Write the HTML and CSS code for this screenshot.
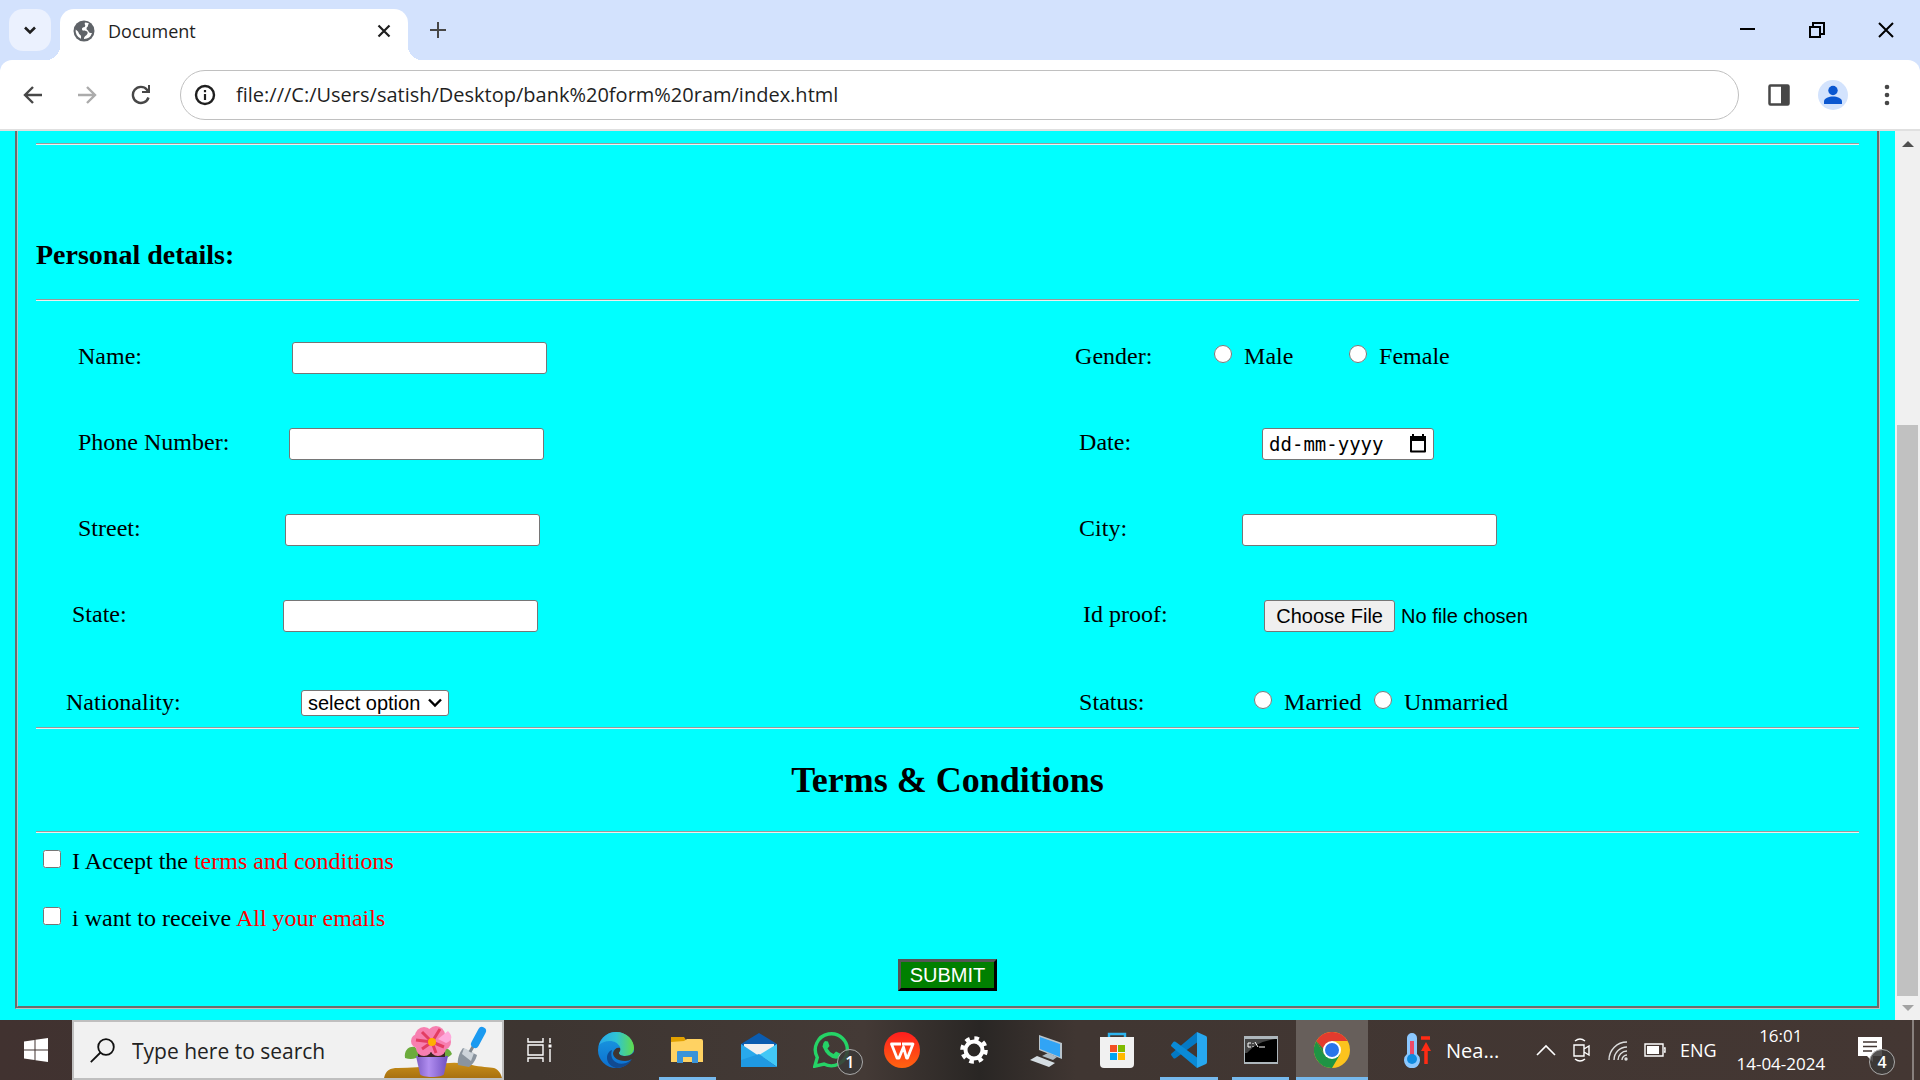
FILE: index.html
```html
<!DOCTYPE html>
<html lang="en-IN">
<head>
<meta charset="utf-8">
<title>Document</title>
<link rel="stylesheet" href="styles.css">
</head>
<body>
<header class="browser">
  <div class="tabstrip">
    <button class="tab-search" aria-label="Search tabs"><svg width="14" height="14" viewBox="0 0 14 14"><path d="M2 4.500l5 5 5-5" fill="none" stroke="#1f1f1f" stroke-width="2.600"/></svg></button>
    <div class="tab">
      <svg width="22" height="22" viewBox="0 0 22 22"><circle cx="11" cy="11" r="10.500" fill="#5f6368"/><path d="M12 2.500c-1 2 1 2.500 0 4s-3 .5-3 2.500 2 1.500 4 2 2 2 1 3.500-3 1.500-3 4.500a8.500 8.500 0 0 0 8-6c-2 0-3 0-3.500-1.500s-2-1.500-2-3 1.500-1.500 1.500-3 1-1.500 1-2A8.500 8.500 0 0 0 12 2.500zM2.700 9.500A8.500 8.500 0 0 0 8 18.800c0-2 .5-3-1-4s-1-2-2-3.300z" fill="#fff"/></svg>
      <span class="tab-title">Document</span>
      <button class="plain" aria-label="Close tab"><svg width="16" height="16" viewBox="0 0 16 16"><path d="M2.500 2.500l11 11m0-11l-11 11" stroke="#1f1f1f" stroke-width="2.200"/></svg></button>
    </div>
    <button class="plain new-tab" aria-label="New tab"><svg width="18" height="18" viewBox="0 0 18 18"><path d="M9 1v16M1 9h16" stroke="#474747" stroke-width="2"/></svg></button>
    <div class="window-controls">
      <button class="plain" aria-label="Minimize"><svg width="16" height="16" viewBox="0 0 16 16"><path d="M0 7h15" stroke="#000" stroke-width="2"/></svg></button>
      <button class="plain" aria-label="Restore"><svg width="16" height="16" viewBox="0 0 16 16"><path d="M1 5h10v10H1zM4 5V1h11v11h-4" fill="none" stroke="#000" stroke-width="2"/></svg></button>
      <button class="plain" aria-label="Close"><svg width="16" height="16" viewBox="0 0 16 16"><path d="M1 1l14 14M15 1L1 15" stroke="#000" stroke-width="2"/></svg></button>
    </div>
  </div>
  <div class="toolbar">
    <div class="nav-buttons">
      <button class="plain" aria-label="Back"><svg width="20" height="20" viewBox="0 0 20 20"><path d="M10 2L2 10l8 8M2 10h17" fill="none" stroke="#474747" stroke-width="2.400"/></svg></button>
      <button class="plain" aria-label="Forward"><svg width="20" height="20" viewBox="0 0 20 20"><path d="M10 2l8 8-8 8M18 10H1" fill="none" stroke="#ababab" stroke-width="2.400"/></svg></button>
      <button class="plain" aria-label="Reload"><svg width="20" height="20" viewBox="0 0 20 20"><path d="M17.500 12.500A8 8 0 1 1 16 4.700L18 7" fill="none" stroke="#474747" stroke-width="2.400"/><path d="M19 0v8h-8V6h4l2-2V0z" fill="#474747"/></svg></button>
    </div>
    <div class="omnibox">
      <svg width="22" height="22" viewBox="0 0 22 22"><circle cx="11" cy="11" r="9" fill="none" stroke="#1f1f1f" stroke-width="2.400"/><path d="M11 10v6M11 6v2.200" stroke="#1f1f1f" stroke-width="2.200"/></svg>
      <input class="url" type="text" aria-label="Address" value="file:///C:/Users/satish/Desktop/bank%20form%20ram/index.html">
    </div>
    <div class="tools">
      <button class="plain" aria-label="Side panel"><svg width="22" height="22" viewBox="0 0 22 22"><rect x="1.500" y="1.500" width="19" height="19" rx="1" fill="none" stroke="#474747" stroke-width="2.500"/><path d="M13 1h8v20h-8z" fill="#474747"/></svg></button>
      <button class="plain" aria-label="Profile"><svg width="30" height="30" viewBox="0 0 30 30"><circle cx="15" cy="15" r="15" fill="#d3e3fd"/><circle cx="15" cy="10.500" r="4.700" fill="#0b57d0"/><path d="M6 24v-2.500c0-3.500 5-5 9-5s9 1.500 9 5V24z" fill="#0b57d0"/></svg></button>
      <button class="plain" aria-label="Menu"><svg width="22" height="22" viewBox="0 0 22 22" fill="#474747"><circle cx="11" cy="3" r="2.300"/><circle cx="11" cy="11" r="2.300"/><circle cx="11" cy="19" r="2.300"/></svg></button>
    </div>
  </div>
</header>

<main class="viewport">
  <form class="page">
    <fieldset class="bank-form">
      <hr>
      <h3>Personal details:</h3>
      <hr>
      <div class="rows">
        <div class="row">
          <div class="cell near"><label class="w-name" for="name">Name:</label><input class="box" id="name" type="text"></div>
          <div class="cell"><span class="w-gender">Gender:</span><label class="option spaced"><input type="radio" name="gender">Male</label><label class="option"><input type="radio" name="gender">Female</label></div>
        </div>
        <div class="row">
          <div class="cell near"><label class="w-phone" for="phone">Phone Number:</label><input class="box" id="phone" type="text"></div>
          <div class="cell inset"><label class="w-date" for="date">Date:</label><span class="date-box"><input class="date" id="date" type="text" placeholder="dd-mm-yyyy"><svg width="18" height="20" viewBox="0 0 18 20"><path d="M2 3h14v14.500H2z" fill="none" stroke="#000" stroke-width="2" stroke-linejoin="round"/><path d="M1 2h16v5H1zM3 0h2v3H3zM13 0h2v3h-2z"/></svg></span></div>
        </div>
        <div class="row">
          <div class="cell near"><label class="w-street" for="street">Street:</label><input class="box" id="street" type="text"></div>
          <div class="cell inset"><label class="w-city" for="city">City:</label><input class="box" id="city" type="text"></div>
        </div>
        <div class="row">
          <div class="cell mid"><label class="w-state" for="state">State:</label><input class="box" id="state" type="text"></div>
          <div class="cell inset-more"><label class="w-proof" for="proof">Id proof:</label><input class="file" id="proof" type="file"></div>
        </div>
        <div class="row last">
          <div class="cell far"><label class="w-nation" for="nation">Nationality:</label><span class="select-box"><select id="nation"><option>select option</option></select><svg width="14" height="10" viewBox="0 0 14 10"><path d="M1 1.500l6 6 6-6" fill="none" stroke="#000" stroke-width="2.400"/></svg></span></div>
          <div class="cell inset"><span class="w-status">Status:</span><label class="option tight"><input type="radio" name="status">Married</label><label class="option"><input type="radio" name="status">Unmarried</label></div>
        </div>
      </div>
      <hr>
      <h2>Terms &amp; Conditions</h2>
      <hr>
      <div class="agreements">
        <label class="option"><input type="checkbox"><span>I Accept the <span class="red">terms and conditions</span></span></label>
        <label class="option"><input type="checkbox"><span>i want to receive <span class="red">All your emails</span></span></label>
      </div>
      <button class="submit" type="button">SUBMIT</button>
    </fieldset>
  </form>
  <div class="scrollbar">
    <svg width="12" height="8" viewBox="0 0 12 8"><path d="M0 7l6-6 6 6z" fill="#505050"/></svg>
    <div class="track"><div class="thumb"></div></div>
    <svg width="12" height="8" viewBox="0 0 12 8"><path d="M0 1l6 6 6-6z" fill="#a3a3a3"/></svg>
  </div>
</main>

<footer class="taskbar">
  <button class="start" aria-label="Start"><svg width="24" height="24" viewBox="0 0 24 24" fill="#fff"><path d="M0 3.500l10.500-1.500v9.500H0zM11.500 1.800L24 0v11.500H11.500zM0 12.500h10.500V22L0 20.500zM11.500 12.500H24V24l-12.500-1.800z"/></svg></button>
  <div class="search">
    <svg width="25" height="25" viewBox="0 0 25 25"><circle cx="16" cy="9" r="7.800" fill="none" stroke="#111" stroke-width="1.800"/><path d="M10.500 14.500L.8 24.200" stroke="#111" stroke-width="1.800"/></svg>
    <input type="text" aria-label="Search" placeholder="Type here to search">
    <svg class="flower" width="118" height="54" viewBox="0 0 118 54">
      <defs><linearGradient id="soil" x1="0" y1="0" x2="0" y2="1"><stop offset="0" stop-color="#c98f18"/><stop offset="1" stop-color="#a87110"/></linearGradient><linearGradient id="pot"><stop offset="0" stop-color="#7d5cc4"/><stop offset=".4" stop-color="#b18ef0"/><stop offset="1" stop-color="#6f4fc0"/></linearGradient></defs>
      <path d="M0 54c2-8 6-10 14-10 12 0 25-1 40-3 8-3 24-3 34 0 8 2 18 2 22 3 5 2 7 6 8 10z" fill="url(#soil)"/>
      <path d="M74 41c-1-5 1-12 5-17l14 7c-1 5-5 10-8 12z" fill="#8a949e"/><path d="M80 24l10 5-3 8-9-7z" fill="#cdd4da"/><path d="M86 28l5-9" stroke="#7d858c" stroke-width="3"/><path d="M91 20l7-13" stroke="#1b9af0" stroke-width="8" stroke-linecap="round"/>
      <path d="M21 34c-1-7 3-12 10-11l6 8c-5 4-10 5-16 3zM68 30c-2-6-8-7-12-4l-4 6c6 3 12 3 16-2z" fill="#6cab3c"/>
      <path d="M32 32h32l-4 18c-1 4-23 4-24 0z" fill="url(#pot)"/><path d="M34 28h27v5H34z" fill="#3d2724"/>
      <g fill="#f77fb0"><circle cx="40" cy="12" r="9"/><circle cx="52" cy="11" r="9"/><circle cx="59" cy="18" r="8"/><circle cx="54" cy="24" r="8"/><circle cx="40" cy="24" r="8"/><circle cx="34" cy="17" r="7"/></g><path d="M54 15l10-8c6 6 3 10-2 12z" fill="#ffa9dc"/><path d="M48 18L38 8m10 10L32 16m16 2l-10 7m10-7l4 11m-4-11l12 5m-12-5L56 5" stroke="#e33d63" stroke-width="3"/><circle cx="48" cy="18" r="4" fill="#ffb000"/>
    </svg>
  </div>
  <button class="task-view" aria-label="Task view"><svg width="26" height="24" viewBox="0 0 26 24"><path d="M1 0v4h15V0M1 7h15v10H1zM1 24v-4h15v4M23 0v5M23 11v13" fill="none" stroke="#fff" stroke-width="1.400"/><path d="M21.500 6.500h3v3h-3z" fill="#fff"/></svg></button>
  <nav class="apps">
    <button aria-label="Edge"><svg width="36" height="36" viewBox="0 0 36 36"><defs><linearGradient id="e1" x1="0" y1="0" x2="1" y2="0"><stop offset="0" stop-color="#28a8ea"/><stop offset=".5" stop-color="#2fc4d4"/><stop offset="1" stop-color="#62dd4a"/></linearGradient><linearGradient id="e2" x1="0" y1="0" x2="0" y2="1"><stop offset="0" stop-color="#1b9de2"/><stop offset="1" stop-color="#0c6fd0"/></linearGradient></defs><circle cx="18" cy="18" r="18" fill="url(#e2)"/><path d="M1 13C4 4 11 0 18 0c11 0 18 8 18 16 0 5-4 8-9 8-4 0-6-1-6-3 0-1 2-2 1-6-2-4-6-6-10-6-5 0-9 2-11 4z" fill="url(#e1)"/><path d="M14 18c-3 9 4 16 14 13 3-1 5-3 6-4-3 6-9 9-16 9-7-2-9-7-9-10 0-4 2-7 5-8z" fill="#114a91"/><path d="M22 16c1 3-1 4-1 5 0 2 3 3 6 3 4 0 6-1 9-4v6l-2 1c-2 1-4 2-7 2-8 0-12-4-12-8 1-4 4-6 7-5z" fill="#3f3531"/></svg></button>
    <button class="running" aria-label="File Explorer"><svg width="34" height="28" viewBox="0 0 34 28"><path d="M1 1h13l2 3v5H1z" fill="#e2a100"/><path d="M1 6l13-1 3-2h14q2 0 2 2v21H1z" fill="#ffd262"/><path d="M7 27V16q0-1 1-1h19q1 0 1 1v11h-6v-6h-9v6z" fill="#3a93d8"/></svg></button>
    <button aria-label="Mail"><svg width="36" height="34" viewBox="0 0 36 34"><path d="M0 11L18 0l18 11v5H0z" fill="#0a5cb0"/><path d="M3 11h30v8L18 28 3 19z" fill="#f0f0f0"/><path d="M0 11l18 12L0 34z" fill="#28a9ec"/><path d="M36 11L18 22l18 12z" fill="#42c8f6"/><path d="M0 34V27l18-6 18 13z" fill="#1f99e2"/></svg></button>
    <button aria-label="WhatsApp"><svg width="36" height="36" viewBox="0 0 36 36"><path d="M1.800 34.200l2.500-8.700A16 16 0 1 1 11 32z" fill="none" stroke="#25d366" stroke-width="3.400"/><path d="M12 9l3 .5 1.500 4.500-2 2.500q2 4 6 5.500l2.500-2.500 4.500 2.200q.5 4.500-4.500 5Q14 26 9.500 14.500 9.500 11 12 9z" fill="#25d366"/></svg><span class="badge">1</span></button>
    <button aria-label="WPS Office"><svg width="36" height="36" viewBox="0 0 36 36"><defs><linearGradient id="wps" x1="0" y1="0" x2="0" y2="1"><stop offset="0" stop-color="#ff1e1e"/><stop offset="1" stop-color="#ff6410"/></linearGradient></defs><circle cx="18" cy="18" r="18" fill="url(#wps)"/><path d="M17 12H7.500l5.500 14h2l4.500-11 3 11h1L29 12H18" fill="none" stroke="#fff" stroke-width="2.800" stroke-linejoin="round"/></svg></button>
    <button aria-label="Settings"><svg width="28" height="28" viewBox="0 0 28 28"><circle cx="14" cy="14" r="8.500" fill="none" stroke="#fff" stroke-width="4"/><circle cx="14" cy="14" r="11.800" fill="none" stroke="#fff" stroke-width="4" stroke-dasharray="4.600 4.668"/></svg></button>
    <button aria-label="This PC"><svg width="34" height="34" viewBox="0 0 34 34"><path d="M10 2l23 8v16l-23-9z" fill="#b8c4cc"/><path d="M11 4l20 7v13l-20-8z" fill="#31a4f5"/><path d="M13 23l6-3 9 4-4 3z" fill="#aebac2"/><path d="M1 27l7-4 18 7-6 4z" fill="#d5dde2"/></svg></button>
    <button aria-label="Microsoft Store"><svg width="36" height="36" viewBox="0 0 36 36"><path d="M10 7V2h16v5" fill="none" stroke="#2eb4ee" stroke-width="2.400"/><path d="M1 5h34v27q0 4-4 4H5q-4 0-4-4z" fill="#f1f1f1"/><path d="M11 13h7v7h-7z" fill="#f25022"/><path d="M19 13h7v7h-7z" fill="#7fba00"/><path d="M11 21h7v7h-7z" fill="#00a4ef"/><path d="M19 21h7v7h-7z" fill="#ffb900"/></svg></button>
    <button class="running" aria-label="Visual Studio Code"><svg width="36" height="36" viewBox="0 0 36 36"><path d="M.5 23.500q-1-1 0-2L26 0v10.500L4.500 26.300q-1 .6-2 0z" fill="#0479c4"/><path d="M.5 12.500q-1 1 0 2L26 36V25.500L4.500 9.700q-1-.6-2 0z" fill="#0a8ad6"/><path d="M26 0l9 4q1 .5 1 2v24q0 1.500-1 2l-9 4z" fill="#27a8f0"/></svg></button>
    <button class="running" aria-label="Command Prompt"><svg width="34" height="28" viewBox="0 0 34 28"><path d="M0 0h34v28H0z" fill="#aeb7bc"/><path d="M1 3h32v23H1z" fill="#000"/><path d="M1 3h30Q12 6 3 17H1z" fill="#444"/><path d="M7 7H4v4h3M9 7v1m0 2v1M11 6l3 5M15 11h6" stroke="#fff" fill="none"/></svg></button>
    <button class="running active" aria-label="Chrome"><svg width="36" height="36" viewBox="0 0 36 36"><circle cx="18" cy="18" r="18" fill="#fcc31e"/><path d="M2.400 9A18 18 0 0 0 18 36l8-13.500H10.200z" fill="#1e9444"/><path d="M2.400 9a18 18 0 0 1 31.200 0H18l-7.800 13.500z" fill="#e33b2e"/><path d="M2.400 9L10.200 22.500 18 27z" fill="#1e9444"/><circle cx="18" cy="18" r="9" fill="#fff"/><circle cx="18" cy="18" r="7" fill="#2a75ea"/></svg></button>
  </nav>
  <div class="tray">
    <div class="weather"><svg width="28" height="36" viewBox="0 0 28 36"><path d="M4 6a5 5 0 0 1 10 0v16a8 8 0 1 1-10 0z" fill="#8cc8ff"/><path d="M9 9v18" stroke="#ed4a68" stroke-width="4"/><circle cx="9" cy="27" r="5" fill="#0f8be0"/><path d="M18 6h9M23 32V16" stroke="#ff2b14" stroke-width="3.500"/><path d="M18 19l5-9 5 9z" fill="#ff2b14"/></svg><span>Nea...</span></div>
    <div class="status">
      <svg width="20" height="24" viewBox="0 0 20 24"><path d="M1 17l9-9 9 9" fill="none" stroke="#fff" stroke-width="1.600"/></svg>
      <svg width="20" height="24" viewBox="0 0 20 24"><path d="M2 7h10v11H2zM12 11l5-3v9l-5-3M3 3q5-4 10 0M3 21q5 4 10 0" fill="none" stroke="#fff" stroke-width="1.400"/></svg>
      <svg width="20" height="24" viewBox="0 0 20 24" fill="none" stroke="#ddd" stroke-width="1.400"><path d="M1 22A18 18 0 0 1 19 4M6 22A13 13 0 0 1 19 9M10 22a9 9 0 0 1 9-9M14 22a5 5 0 0 1 5-5"/><circle cx="18" cy="21" r="1" fill="#fff"/></svg>
      <svg width="22" height="24" viewBox="0 0 22 24"><path d="M1 6h18v12H1zM20 10h1v4h-1" fill="none" stroke="#fff" stroke-width="1.400"/><path d="M3 8h12v8H3z" fill="#fff"/></svg>
      <span>ENG</span>
    </div>
    <div class="clock"><span>16:01</span><span>14-04-2024</span></div>
    <button class="notices" aria-label="Notifications"><svg width="24" height="26" viewBox="0 0 24 26"><path d="M0 0h24v19H15v6l-6-6H0z" fill="#fff"/><path d="M5 5h14M5 9.500h14M5 14h9" stroke="#413632" stroke-width="1.400"/></svg><span class="badge">4</span></button>
    <div class="peek"></div>
  </div>
</footer>
</body>
</html>
```
FILE: styles.css
```css
* { box-sizing: border-box; }
body {
  margin: 0;
  height: 100vh;
  display: flex;
  flex-direction: column;
  overflow: hidden;
  background: #fff;
  font-family: "Open Sans", sans-serif;
}
button { font: inherit; cursor: pointer; }
svg { display: block; flex: none; }
.plain { border: 0; padding: 0; background: none; }

/* Browser frame */
.browser { flex: none; background: #d3e2fd; }
.tabstrip { display: flex; align-items: center; height: 60px; padding-left: 9px; }
.tab-search {
  display: grid;
  place-items: center;
  width: 42px;
  height: 42px;
  border: 0;
  border-radius: 14px;
  background: #ebf1fe;
}
.tab {
  position: relative;
  align-self: flex-end;
  display: flex;
  align-items: center;
  gap: 13px;
  width: 348px;
  height: 51px;
  margin-left: 9px;
  padding: 0 16px 8px 13px;
  border-radius: 14px 14px 0 0;
  background: #fff;
}
.tab::before, .tab::after {
  content: "";
  position: absolute;
  bottom: 0;
  width: 14px;
  height: 14px;
}
.tab::before { right: 100%; background: radial-gradient(circle at 0 0, transparent 14px, #fff 14px); }
.tab::after { left: 100%; background: radial-gradient(circle at 100% 0, transparent 14px, #fff 14px); }
.tab-title { flex: 1; font-size: 18px; line-height: 24px; color: #1f1f1f; }
.new-tab { margin-left: 21px; }
.window-controls { display: flex; gap: 53px; margin-left: auto; padding-right: 26px; }
.toolbar {
  display: flex;
  align-items: center;
  height: 71px;
  padding: 0 22px 0 23px;
  border-bottom: 2px solid #e0e0e0;
  border-radius: 12px 12px 0 0;
  background: #fff;
}
.nav-buttons { display: flex; gap: 34px; width: 157px; }
.omnibox {
  flex: 1;
  display: flex;
  align-items: center;
  gap: 20px;
  height: 50px;
  padding: 0 14px 0 13px;
  border: 1px solid #c0c0c0;
  border-radius: 25px;
}
.url { flex: 1; border: 0; padding: 0; outline: 0; font: 20px/28px "Open Sans", sans-serif; color: #1f1f1f; }
.tools { display: flex; align-items: center; gap: 28px; margin-left: 29px; }

/* Document */
.viewport { flex: 1; display: flex; min-height: 0; overflow: hidden; background: #0ff; }
.page { flex: 1; padding: 0 15px; font: 24px/28px "Liberation Serif", "Times New Roman", serif; color: #000; }
.bank-form {
  margin: 0;
  padding: 12px 18px 15px;
  border: 3px groove #c0c0c0;
  border-top: 0;
}
hr { margin: 0; border: 0; border-top: 1px solid #9a9a9a; border-bottom: 1px solid #eee; }
h3 { margin: 94px 0 28px; font-size: 28px; line-height: 32px; }
h2 { margin: 31px 0 31px; font-size: 36px; line-height: 40px; text-align: center; }
.rows { display: grid; gap: 54px; margin: 41px 0 9px; }
.row { display: grid; grid-template-columns: 57% 43%; }
.row.last { padding-top: 2px; }
.cell { display: flex; align-items: flex-start; height: 32px; }
.last .cell { height: 30px; }
.near { padding-left: 42px; }
.mid { padding-left: 36px; }
.far { padding-left: 30px; }
.inset { padding-left: 4px; }
.inset-more { padding-left: 8px; }
.w-name { width: 214px; }
.w-phone { width: 211px; }
.w-street { width: 207px; }
.w-state { width: 211px; }
.w-nation { width: 235px; }
.w-gender { width: 139px; }
.w-date { width: 183px; }
.w-city { width: 163px; }
.w-proof { width: 181px; }
.w-status { width: 175px; }
.box, .date, select {
  margin: 0;
  border: 1px solid #767676;
  border-radius: 3px;
  background: #fff;
  font: 20px "Liberation Sans", Arial, sans-serif;
  color: #000;
}
.box { width: 255px; height: 32px; }
.date-box, .select-box { position: relative; display: block; }
.date-box svg { position: absolute; right: 7px; top: 6px; }
.select-box svg { position: absolute; right: 7px; top: 10px; pointer-events: none; }
.date { display: block; width: 172px; height: 32px; padding: 0 6px; font: 19px "DejaVu Sans Mono", monospace; }
.date::placeholder { color: #000; }
select { display: block; width: 148px; height: 26px; margin-top: 2px; padding: 0 6px; appearance: none; line-height: 24px; }
.file { width: 300px; height: 32px; font: 20px "Liberation Sans", Arial, sans-serif; }
.file::file-selector-button {
  width: 131px;
  height: 32px;
  margin: 0 6px 0 0;
  padding: 0;
  border: 1px solid #767676;
  border-radius: 3px;
  background: #efefef;
  font: 20px "Liberation Sans", Arial, sans-serif;
}
.option { display: flex; gap: 12px; }
.option input { width: 18px; height: 18px; margin: 3px 0 0; }
.spaced { width: 135px; }
.tight { width: 120px; }
.agreements { display: grid; gap: 29px; margin-top: 14px; padding-left: 7px; justify-content: start; }
.agreements .option { gap: 11px; }
.red { color: #f00; }
.submit {
  display: block;
  width: 99px;
  height: 32px;
  margin: 27px auto 0;
  padding: 0;
  border: 3px solid;
  border-color: #555 #000 #000 #555;
  background: green;
  font: 20px "Liberation Sans", Arial, sans-serif;
  color: #fff;
}

/* Scrollbar */
.scrollbar {
  display: flex;
  flex-direction: column;
  align-items: center;
  width: 25px;
  padding: 9px 0 8px;
  background: #f0f0f0;
}
.track { flex: 1; display: flex; flex-direction: column; justify-content: flex-end; padding: 8px 0; }
.thumb { width: 21px; height: 68%; background: #c1c1c1; }

/* Taskbar */
.taskbar {
  flex: none;
  display: flex;
  height: 60px;
  background: linear-gradient(90deg, #413230 0, #3d3531 28%, #443a36 45%, #292624 51%, #403632 56%, #443733 100%);
  color: #fff;
}
.taskbar button { position: relative; display: grid; place-items: center; padding: 0; border: 0; background: none; color: inherit; }
.taskbar .start { width: 72px; }
.search {
  display: flex;
  align-items: center;
  width: 432px;
  padding-left: 16px;
  border: 2px solid #bfbfbf;
  background: #f1f1f1;
}
.search input { flex: 1; min-width: 0; padding: 2px 0 0 17px; border: 0; outline: 0; background: none; font: 21px/30px "Open Sans", sans-serif; }
.search input::placeholder { color: #222; }
.flower { align-self: flex-end; }
.taskbar .task-view { width: 76px; padding-right: 4px; }
.apps { display: flex; width: 788px; }
.apps button { flex: 1; }
.apps .running::after {
  content: "";
  position: absolute;
  inset: auto 7px 0;
  height: 3px;
  background: #76b9ed;
}
.apps .active { background: #675f5b; }
.apps .active::after { inset: auto 0 0; }
.badge {
  position: absolute;
  display: grid;
  place-items: center;
  width: 26px;
  height: 26px;
  border: 1px solid #aaa;
  border-radius: 50%;
  background: #3b3837dd;
  font-size: 16px;
  line-height: 20px;
  font-weight: 600;
}
.apps .badge { left: 42px; top: 29px; }
.tray { flex: 1; display: flex; align-items: center; }
.weather { display: flex; align-items: center; gap: 15px; width: 133px; margin-left: 35px; font-size: 20px; line-height: 28px; }
.weather span { padding-top: 2px; }
.status { display: flex; align-items: center; gap: 16px; font-size: 18px; }
.status span { margin-left: -2px; }
.clock { display: grid; flex: 1; padding-left: 8px; text-align: center; font-size: 17px; line-height: 28px; }
.taskbar .notices { width: 66px; height: 60px; }
.notices .badge { left: 32px; top: 29px; }
.peek { width: 8px; height: 60px; margin-left: 9px; border-left: 2px solid #88807d; }
```
